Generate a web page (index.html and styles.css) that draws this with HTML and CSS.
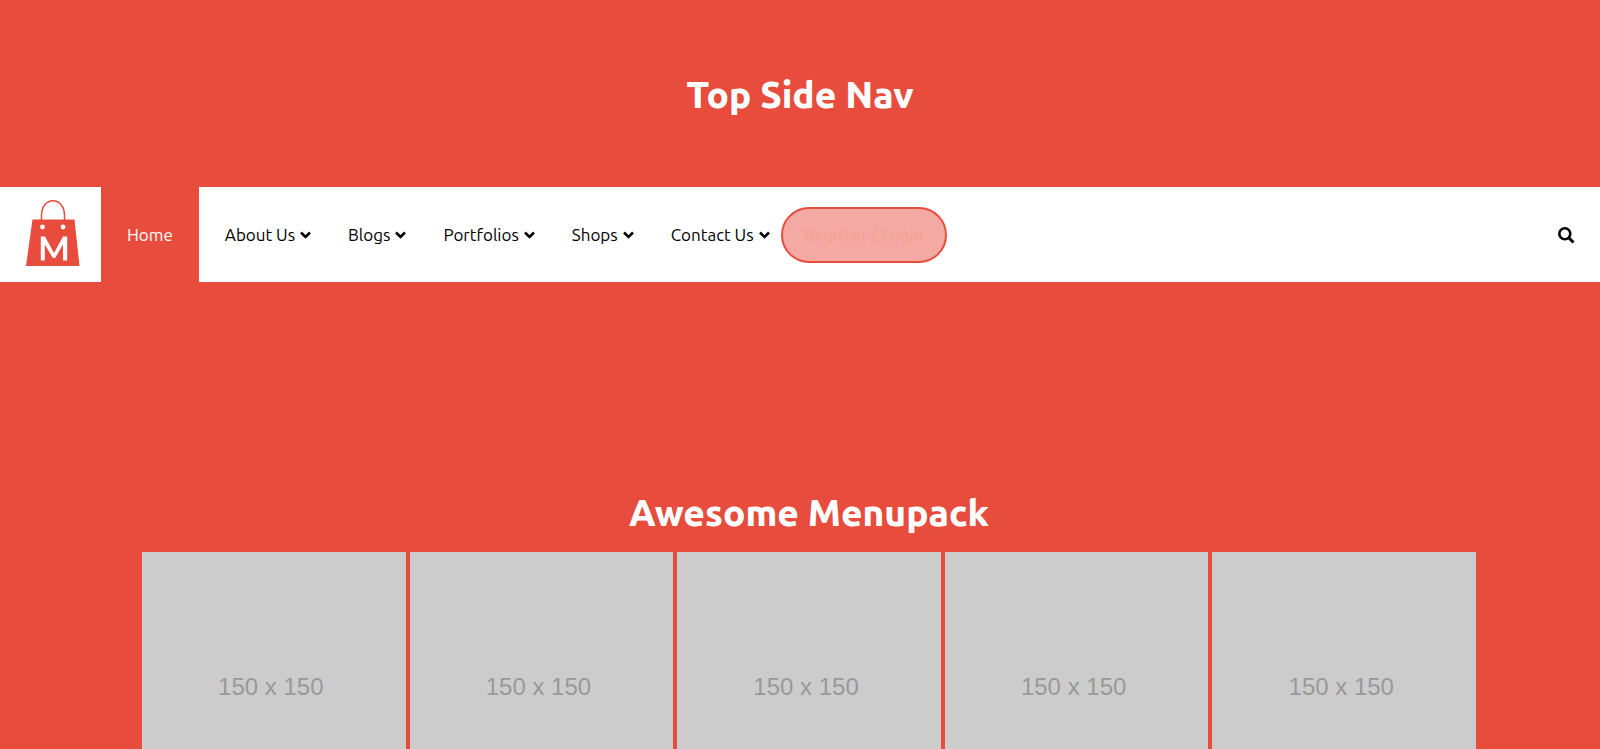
FILE: index.html
```
<!DOCTYPE html>
<html lang="en">
<head>
  <meta charset="UTF-8">
  <meta name="viewport" content="width=device-width, initial-scale=1.0">
  <title>Top Side Nav</title>
  <link rel="stylesheet" href="styles.css">
</head>
<body>
  <header class="header">
    <h1>Top Side Nav</h1>
  </header>

  <nav class="navbar">
    <a href="#" class="logo" aria-label="Home page">
      <svg width="54" height="70" viewBox="0 0 54 70">
        <path d="M15.500 20V15.500C15.500 6.500 20.500 .8 27 .8S38.500 6.500 38.500 15.500V20" fill="none" stroke="#e74c3c" stroke-width="1.500"/>
        <path d="M6.500 19.500H48.500L53.500 66H0Z" fill="#e74c3c"/>
        <circle cx="16.500" cy="27" r="2.400" fill="#fff"/>
        <circle cx="37" cy="27" r="2.400" fill="#fff"/>
        <path d="M14.800 60.500V36.500H19L28 53L37 36.500H41.200V60.500H37V44.500L29.200 58H26.800L18.800 44.500V60.500Z" fill="#fff"/>
      </svg>
    </a>
    <ul class="menu">
      <li><a href="#" class="active">Home</a></li>
      <li><a href="#" class="drop">About Us <svg class="arrow" viewBox="0 0 11 8"><path d="M1 1.500L5.500 6L10 1.500"/></svg></a></li>
      <li><a href="#" class="drop">Blogs <svg class="arrow" viewBox="0 0 11 8"><path d="M1 1.500L5.500 6L10 1.500"/></svg></a></li>
      <li><a href="#" class="drop">Portfolios <svg class="arrow" viewBox="0 0 11 8"><path d="M1 1.500L5.500 6L10 1.500"/></svg></a></li>
      <li><a href="#" class="drop">Shops <svg class="arrow" viewBox="0 0 11 8"><path d="M1 1.500L5.500 6L10 1.500"/></svg></a></li>
      <li><a href="#" class="drop">Contact Us <svg class="arrow" viewBox="0 0 11 8"><path d="M1 1.500L5.500 6L10 1.500"/></svg></a></li>
    </ul>
    <button type="button" class="register">Register / Login</button>
    <button type="button" class="search" aria-label="Search">
      <svg width="17" height="17" viewBox="0 0 17 17">
        <circle cx="6.800" cy="6.800" r="5.500" fill="none" stroke="#000" stroke-width="2.600"/>
        <path d="M11 11L15.500 15.500" stroke="#000" stroke-width="3"/>
      </svg>
    </button>
  </nav>

  <main class="content">
    <h2>Awesome Menupack</h2>
    <div class="gallery">
      <div class="card">150 x 150</div>
      <div class="card">150 x 150</div>
      <div class="card">150 x 150</div>
      <div class="card">150 x 150</div>
      <div class="card">150 x 150</div>
    </div>
  </main>
</body>
</html>
```
FILE: styles.css
```
* {
  margin: 0;
  padding: 0;
  box-sizing: border-box;
}
body {
  font-family: Ubuntu, "Noto Sans", sans-serif;
  font-size: 17px;
  background: #e74c3c;
  color: #000;
}
h1, h2 {
  font-size: 37px;
  line-height: 46px;
  font-weight: 800;
  text-align: center;
  color: #fff;
}
.header {
  padding: 72px 0 69px;
}
.navbar {
  display: flex;
  align-items: center;
  height: 95px;
  background: #fff;
}
.logo {
  display: flex;
  padding: 0 21px 0 26px;
}
.menu {
  display: flex;
  height: 100%;
  list-style: none;
}
.menu a {
  display: flex;
  align-items: center;
  height: 100%;
  padding: 0 26px;
  color: #000;
  text-decoration: none;
  white-space: nowrap;
}
.menu .drop {
  gap: 5px;
  padding-right: 11px;
}
.menu .active {
  background: #e74c3c;
  color: #fff;
}
.arrow {
  width: 11px;
  height: 8px;
  fill: none;
  stroke: #000;
  stroke-width: 2.5;
}
.register {
  height: 56px;
  padding: 0 21px;
  font: inherit;
  color: #f2a099;
  background: #f4a9a2;
  border: 2px solid #e74c3c;
  border-radius: 28px;
  cursor: pointer;
}
.search {
  display: flex;
  margin-left: auto;
  padding: 2px 25px 0;
  background: none;
  border: none;
  cursor: pointer;
}
.content {
  margin: 0 124px;
  padding: 208px 0 0 18px;
}
.gallery {
  display: grid;
  grid-template-columns: repeat(5, 1fr);
  gap: 4px;
  margin-top: 16px;
}
.card {
  display: flex;
  align-items: center;
  justify-content: center;
  aspect-ratio: 1;
  padding: 6px 6px 0 0;
  background: #ccc;
  color: #999;
  font-family: "Liberation Sans", Arial, sans-serif;
  font-size: 24px;
}
```
